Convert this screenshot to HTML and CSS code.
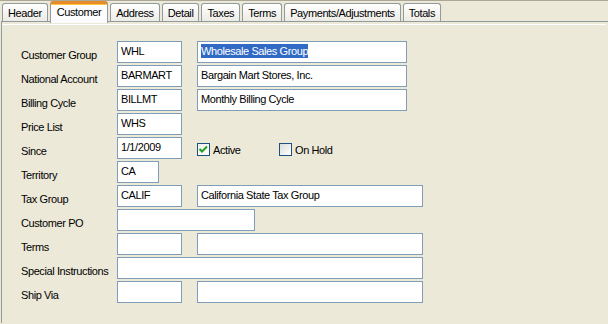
FILE: index.html
```html
<!DOCTYPE html>
<html lang="en">
<head>
    <meta charset="UTF-8">
    <title>Customer</title>
    <link rel="stylesheet" href="styles.css">
</head>
<body>
    <div class="tabs">
        <div class="tab">Header</div>
        <div class="tab active">Customer</div>
        <div class="tab">Address</div>
        <div class="tab">Detail</div>
        <div class="tab">Taxes</div>
        <div class="tab">Terms</div>
        <div class="tab">Payments/Adjustments</div>
        <div class="tab">Totals</div>
    </div>

    <div class="panel">
        <div class="page">
            <div class="form">
                <div class="label">Customer Group</div>
                <div class="fields">
                    <div class="field code">WHL</div>
                    <div class="field name"><span class="selected">Wholesale Sales Group</span></div>
                </div>

                <div class="label">National Account</div>
                <div class="fields">
                    <div class="field code">BARMART</div>
                    <div class="field name">Bargain Mart Stores, Inc.</div>
                </div>

                <div class="label">Billing Cycle</div>
                <div class="fields">
                    <div class="field code">BILLMT</div>
                    <div class="field name">Monthly Billing Cycle</div>
                </div>

                <div class="label">Price List</div>
                <div class="fields">
                    <div class="field code">WHS</div>
                </div>

                <div class="label">Since</div>
                <div class="fields">
                    <div class="field code">1/1/2009</div>
                    <label class="check">
                        <span class="box checked">
                            <svg width="11" height="11" viewBox="0 0 11 11"><path d="M1.5 5 L4 7.5 L9 2.5" fill="none" stroke="#21a121" stroke-width="2"/></svg>
                        </span>
                        Active
                    </label>
                    <label class="check">
                        <span class="box"></span>
                        On Hold
                    </label>
                </div>

                <div class="label">Territory</div>
                <div class="fields">
                    <div class="field territory">CA</div>
                </div>

                <div class="label">Tax Group</div>
                <div class="fields">
                    <div class="field code">CALIF</div>
                    <div class="field wide">California State Tax Group</div>
                </div>

                <div class="label">Customer PO</div>
                <div class="fields">
                    <div class="field po"></div>
                </div>

                <div class="label">Terms</div>
                <div class="fields">
                    <div class="field code"></div>
                    <div class="field wide"></div>
                </div>

                <div class="label">Special Instructions</div>
                <div class="fields">
                    <div class="field special"></div>
                </div>

                <div class="label">Ship Via</div>
                <div class="fields">
                    <div class="field code"></div>
                    <div class="field wide"></div>
                </div>
            </div>
        </div>
    </div>
</body>
</html>
```

FILE: styles.css
```css
body {
    margin: 0;
    height: 324px;
    box-sizing: border-box;
    overflow: hidden;
    background-color: #ece9d8;
    border-top: 1px solid #aca899;
    font-family: 'Liberation Sans', Arial, sans-serif;
    font-size: 11px;
    letter-spacing: -0.4px;
    color: #000;
}

/* Tab strip */
.tabs {
    display: flex;
    align-items: flex-end;
    height: 20px;
    padding-left: 2px;
    gap: 2px;
}

.tab {
    height: 18px;
    box-sizing: border-box;
    padding: 0 5px;
    border: 1px solid #919b9c;
    border-bottom: none;
    border-radius: 3px 3px 0 0;
    background: linear-gradient(#ffffff, #ecebe6);
    line-height: 18px;
    white-space: nowrap;
}

.tab.active {
    position: relative;
    z-index: 1;
    height: 22px;
    margin-bottom: -2px;
    padding: 0 6px;
    border-top: 3px solid #e68b2c;
    box-shadow: inset 0 1px 0 #ffc83c;
    background: #fcfcfe;
    line-height: 16px;
}

/* Tab page */
.panel {
    height: 302px;
    margin-left: 1px;
    padding-top: 2px;
    box-sizing: border-box;
    border-top: 1px solid #919b9c;
    border-left: 1px solid #919b9c;
}

.page {
    height: 100%;
    margin-right: 2px;
    padding: 16px 0 0 19px;
    box-sizing: border-box;
    border-top: 1px solid #fff;
}

.form {
    display: grid;
    grid-template-columns: 96px auto;
    row-gap: 2px;
}

.label {
    height: 22px;
    box-sizing: border-box;
    padding-top: 8px;
    line-height: 13px;
    white-space: nowrap;
}

.fields {
    display: flex;
    gap: 15px;
}

.field {
    height: 22px;
    box-sizing: border-box;
    padding: 2px 3px 0;
    border: 1px solid #7f9db9;
    background-color: #fff;
    line-height: 14px;
    white-space: nowrap;
    overflow: hidden;
}

.field.code { width: 65px; }
.field.name { width: 210px; }
.field.wide { width: 226px; }
.field.territory { width: 42px; }
.field.po { width: 138px; }
.field.special { width: 306px; }

.selected {
    padding: 1px 0;
    background-color: #316ac5;
    color: #fff;
}

/* Checkboxes */
.check {
    display: flex;
    align-items: center;
    gap: 3px;
    height: 13px;
    margin-top: 6px;
}

.check:first-of-type {
    width: 67px;
}

.box {
    display: flex;
    align-items: center;
    justify-content: center;
    width: 13px;
    height: 13px;
    box-sizing: border-box;
    border: 1px solid #1c5180;
    background: linear-gradient(135deg, #dcdcd7, #ffffff);
}

.box.checked {
    background: linear-gradient(135deg, #f0f0ec, #ffffff);
}
```
